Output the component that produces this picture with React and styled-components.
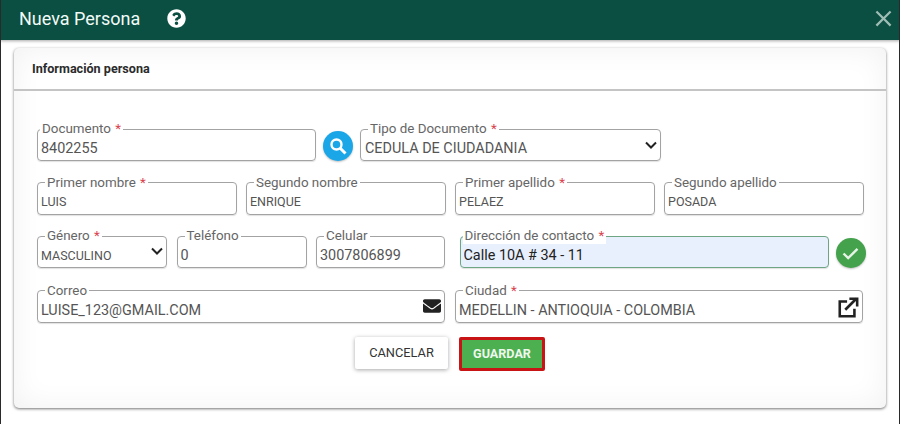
import styled, { createGlobalStyle } from "styled-components";
import { FaEnvelope, FaQuestionCircle } from "react-icons/fa";
import { MdClose } from "react-icons/md";

const GlobalStyle = createGlobalStyle`
  html, body {
    margin: 0;
    padding: 0;
    background: #fff;
  }
  body {
    font-family: Roboto, "Liberation Sans", sans-serif;
    color: #333;
  }
  * {
    box-sizing: border-box;
  }
`;

function Field({ label, required, value, small, valid, flush, children }) {
  return (
    <FieldBox $valid={valid}>
      <Legend $flush={flush}>
        {label}
        {required && <Star> *</Star>}
      </Legend>
      {children || <Input readOnly value={value} $small={small} $valid={valid} />}
    </FieldBox>
  );
}

function Chevron() {
  return (
    <svg viewBox="0 0 12 8" width="12" height="8" fill="none" stroke="#222" strokeWidth="2">
      <path d="M1 1.5l5 5 5-5" />
    </svg>
  );
}

export default function App() {
  return (
    <Page>
      <GlobalStyle />
      <Header>
        <Title>Nueva Persona</Title>
        <HelpIcon />
        <CloseButton>
          <MdClose />
        </CloseButton>
      </Header>
      <Card>
        <CardHeader>Información persona</CardHeader>
        <Form>
          <DocRow>
            <Field label="Documento" required value="8402255" flush />
            <RoundButton $color="#1ba6e8">
              <svg viewBox="0 0 18 18" width="18" height="18" fill="none" stroke="#fff" strokeWidth="2.4">
                <circle cx="7.5" cy="7.5" r="5" />
                <path d="M11 11l5.5 5.5" strokeWidth="3" />
              </svg>
            </RoundButton>
            <Field label="Tipo de Documento" required>
              <Select defaultValue="cc">
                <option value="cc">CEDULA DE CIUDADANIA</option>
              </Select>
              <FieldIcon $top={-3}>
                <Chevron />
              </FieldIcon>
            </Field>
          </DocRow>
          <NameRow>
            <Field label="Primer nombre" required value="LUIS" small />
            <Field label="Segundo nombre" value="ENRIQUE" small />
            <Field label="Primer apellido" required value="PELAEZ" small />
            <Field label="Segundo apellido" value="POSADA" small />
          </NameRow>
          <ContactRow>
            <Field label="Género" required>
              <Select $small defaultValue="m">
                <option value="m">MASCULINO</option>
              </Select>
              <FieldIcon $top={-4}>
                <Chevron />
              </FieldIcon>
            </Field>
            <Field label="Teléfono" value="0" />
            <Field label="Celular" value="3007806899" />
            <AddressCell>
              <Field label="Dirección de contacto" required value="Calle 10A # 34 - 11" valid flush />
              <RoundButton $color="#43a24b">
                <svg viewBox="0 0 18 14" width="17" height="13" fill="none" stroke="#e6f3e6" strokeWidth="2.6">
                  <path d="M1.5 7l5 5L16.5 2" />
                </svg>
              </RoundButton>
            </AddressCell>
          </ContactRow>
          <MailRow>
            <Field label="Correo">
              <Input readOnly value="LUISE_123@GMAIL.COM" $low />
              <FieldIcon $top={-4}>
                <FaEnvelope />
              </FieldIcon>
            </Field>
            <Field label="Ciudad" required>
              <Input readOnly value="MEDELLIN - ANTIOQUIA - COLOMBIA" $low />
              <FieldIcon $top={-3}>
                <svg viewBox="0 0 24 24" width="22" height="22" fill="none" stroke="#222" strokeWidth="2.8">
                  <path d="M11 6H3v16h16v-8" />
                  <path d="M9 15L21 3" />
                  <path d="M13.5 3H22v8.5" />
                </svg>
              </FieldIcon>
            </Field>
          </MailRow>
          <Actions>
            <CancelButton>CANCELAR</CancelButton>
            <SaveButton>GUARDAR</SaveButton>
          </Actions>
        </Form>
      </Card>
    </Page>
  );
}

const Page = styled.div`
  width: 900px;
  height: 424px;
  overflow: hidden;
  background: #fff;
  border-left: 1px solid #2a2a2a;
  border-right: 1px solid #2a2a2a;
`;

const Header = styled.header`
  height: 40px;
  margin-left: -1px;
  margin-right: -1px;
  padding: 0 3px 3px 19px;
  display: flex;
  align-items: center;
  background: #0b4f42;
  box-shadow: 0 1px 3px rgba(0, 0, 0, 0.35);
`;

const Title = styled.h1`
  margin: 0;
  font-size: 18px;
  font-weight: 400;
  color: #f2fbf8;
`;

const HelpIcon = styled(FaQuestionCircle)`
  margin-left: 27px;
  width: 19px;
  height: 19px;
  color: #fff;
`;

const CloseButton = styled.div`
  margin-left: auto;
  display: flex;
  font-size: 27px;
  color: #9fbdb5;
`;

const Card = styled.section`
  margin: 8px 13px 0;
  height: 360px;
  background: #fff;
  border-radius: 5px;
  box-shadow: 0 1px 3px rgba(0, 0, 0, 0.55), inset 0 0 30px rgba(0, 0, 0, 0.06);
`;

const CardHeader = styled.div`
  height: 43px;
  padding: 0 18px;
  display: flex;
  align-items: center;
  font-size: 12.6px;
  font-weight: 700;
  color: #2b2b2b;
  border-bottom: 2px solid #c4c4c4;
`;

const Form = styled.form`
  padding: 30px 23px 0;
  display: flex;
  flex-direction: column;
  gap: 13.67px;
`;

const DocRow = styled.div`
  display: grid;
  grid-template-columns: 279px 30px 301px;
  column-gap: 7px;
  align-items: end;
`;

const NameRow = styled.div`
  display: grid;
  grid-template-columns: repeat(4, 200px);
  column-gap: 9px;
`;

const ContactRow = styled.div`
  display: grid;
  grid-template-columns: 130px 130px 129px 405px;
  column-gap: 9.5px;
`;

const AddressCell = styled.div`
  margin-left: 5px;
  display: grid;
  grid-template-columns: 369px 29px;
  column-gap: 7px;
  align-items: end;
`;

const MailRow = styled.div`
  margin-top: 1px;
  display: grid;
  grid-template-columns: 408px 408px;
  column-gap: 10px;
`;

const FieldBox = styled.fieldset`
  position: relative;
  margin: 0;
  padding: 0 3px;
  min-width: 0;
  height: 40px;
  border: 1px solid ${(p) => (p.$valid ? "#6fa583" : "#a3a3a3")};
  border-radius: 4px;
  background: ${(p) => (p.$valid ? "#e8f0fe" : "transparent")};
  box-shadow: 0 1px 1px rgba(0, 0, 0, 0.12);
`;

const Legend = styled.legend`
  margin-left: ${(p) => (p.$flush ? "-1px" : "4px")};
  padding: 0 2px;
  font-size: 13.4px;
  line-height: 16px;
  color: #666;
  background: #fff;
  white-space: nowrap;
`;

const Star = styled.span`
  margin-left: 1px;
  color: #d9434f;
`;

const Input = styled.input`
  display: block;
  width: 100%;
  height: 22px;
  padding: ${(p) => (p.$low ? "2px" : "0")} 0 0;
  border: 0;
  outline: 0;
  background: transparent;
  font-family: inherit;
  font-size: ${(p) => (p.$small ? "12.5px" : "14.4px")};
  color: ${(p) => (p.$valid ? "#222" : "#555")};
`;

const Select = styled.select`
  display: block;
  width: 100%;
  height: 22px;
  padding: 0 0 0 ${(p) => (p.$small ? "0" : "1px")};
  border: 0;
  outline: 0;
  appearance: none;
  background: transparent;
  font-family: inherit;
  font-size: ${(p) => (p.$small ? "12.5px" : "14.4px")};
  color: #555;
`;

const FieldIcon = styled.span`
  position: absolute;
  right: 3px;
  top: ${(p) => p.$top}px;
  height: 22px;
  display: flex;
  align-items: center;
  font-size: 18px;
  color: #222;
`;

const RoundButton = styled.div`
  width: 30px;
  height: 30px;
  border-radius: 50%;
  display: flex;
  align-items: center;
  justify-content: center;
  background: ${(p) => p.$color};
  box-shadow: 0 1px 2px rgba(0, 0, 0, 0.25);
`;

const Actions = styled.div`
  display: flex;
  justify-content: center;
  align-items: flex-start;
  gap: 11px;
`;

const CancelButton = styled.button`
  width: 93px;
  height: 32px;
  padding: 0;
  border: 0;
  border-radius: 2px;
  background: #fff;
  font-family: inherit;
  font-size: 12.8px;
  font-weight: 400;
  color: #333;
  box-shadow: 0 1px 4px rgba(0, 0, 0, 0.35);
`;

const SaveButton = styled.button`
  width: 86px;
  height: 34px;
  padding: 0;
  border: 3px solid #c81414;
  border-radius: 2px;
  background: #4caf50;
  font-family: inherit;
  font-size: 12.6px;
  font-weight: 700;
  color: #eef7ee;
`;
